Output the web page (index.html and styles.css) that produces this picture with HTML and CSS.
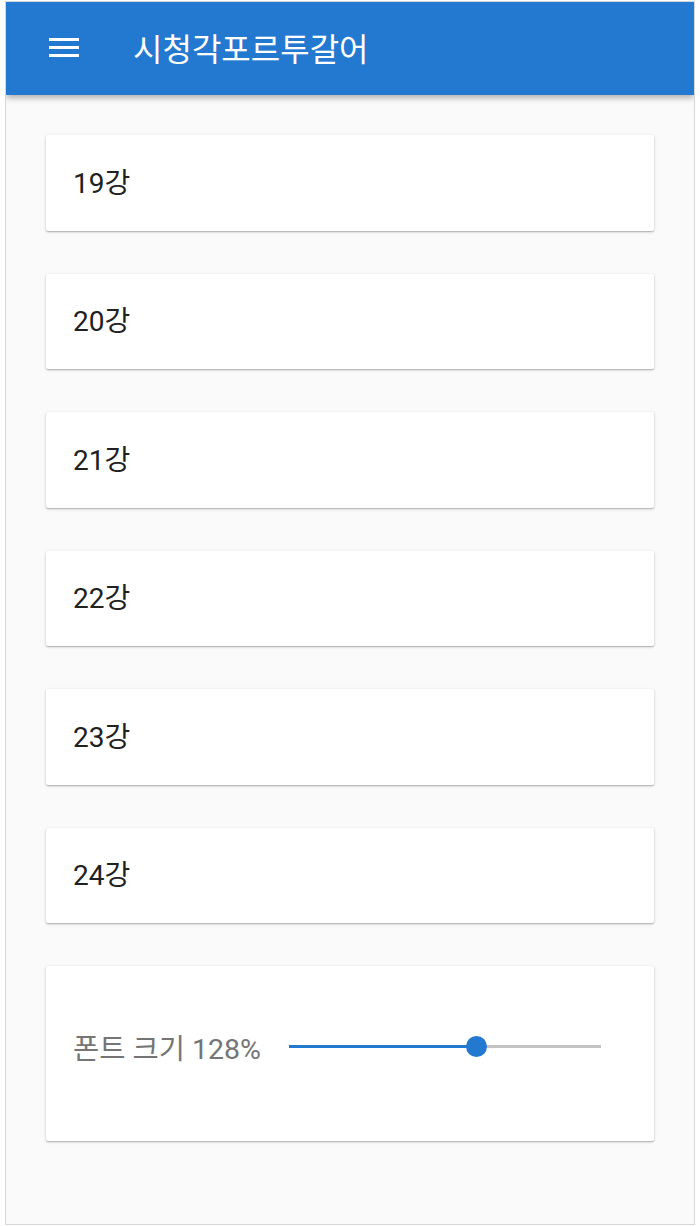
FILE: index.html
```html
<!DOCTYPE html>
<html lang="ko">
<head>
<meta charset="utf-8">
<title>시청각포르투갈어</title>
<link rel="stylesheet" href="styles.css">
</head>
<body>
<div class="frame">
  <header class="appbar">
    <svg class="menu" width="30" height="19" viewBox="0 0 30 19" aria-hidden="true">
      <rect x="0" y="0" width="30" height="3" fill="#fff"/>
      <rect x="0" y="8" width="30" height="3" fill="#fff"/>
      <rect x="0" y="16" width="30" height="3" fill="#fff"/>
    </svg>
    <h1 class="title">시청각포르투갈어</h1>
  </header>
  <main class="list">
    <div class="card lesson">19강</div>
    <div class="card lesson">20강</div>
    <div class="card lesson">21강</div>
    <div class="card lesson">22강</div>
    <div class="card lesson">23강</div>
    <div class="card lesson">24강</div>
    <div class="card settings">
      <span class="label">폰트 크기 128%</span>
      <div class="slider">
        <div class="fill" style="width:60%"></div>
        <div class="thumb" style="left:60%"></div>
      </div>
    </div>
  </main>
</div>
</body>
</html>
```
FILE: styles.css
```css
html, body {
  margin: 0;
  padding: 0;
  background: #ffffff;
}
body {
  font-family: Roboto, "Noto Sans CJK KR", sans-serif;
}
.frame {
  box-sizing: border-box;
  margin: 1px 0 0 5px;
  width: 690px;
  height: 1224px;
  border: 1px solid #d6d6d6;
  background: #fafafa;
  overflow: hidden;
}
.appbar {
  height: 93px;
  background: #2379d0;
  display: flex;
  align-items: center;
  padding-left: 43px;
  box-shadow: 0 3px 6px rgba(0, 0, 0, 0.3);
  position: relative;
  z-index: 1;
}
.menu {
  display: block;
  flex: none;
  margin-top: -2px;
}
.title {
  margin: -4px 0 0 54px;
  font-family: "Noto Sans CJK KR", sans-serif;
  font-weight: 400;
  font-size: 32px;
  color: #ffffff;
  line-height: 1;
}
.list {
  display: flex;
  flex-direction: column;
  gap: 43px;
  padding: 40px 40px 0 40px;
}
.card {
  background: #ffffff;
  border-radius: 2px;
  box-shadow: 0 1px 3px rgba(0, 0, 0, 0.22), 0 1px 1px rgba(0, 0, 0, 0.14);
}
.lesson {
  height: 95.5px;
  box-sizing: border-box;
  display: flex;
  align-items: center;
  padding: 0 0 4px 27px;
  font-size: 28px;
  color: #212121;
}
.settings {
  height: 175px;
  box-sizing: border-box;
  display: flex;
  align-items: center;
  padding: 0 53px 14px 27px;
}
.label {
  font-size: 28.5px;
  color: #757575;
  white-space: nowrap;
  flex: none;
}
.slider {
  position: relative;
  margin-left: 28px;
  flex: 1;
  height: 3px;
  background: #c2c2c2;
}
.fill {
  position: absolute;
  left: 0;
  top: 0;
  bottom: 0;
  background: #2379d0;
}
.thumb {
  position: absolute;
  top: 50%;
  width: 21px;
  height: 21px;
  margin: -10.5px 0 0 -10.5px;
  border-radius: 50%;
  background: #2379d0;
}
```
